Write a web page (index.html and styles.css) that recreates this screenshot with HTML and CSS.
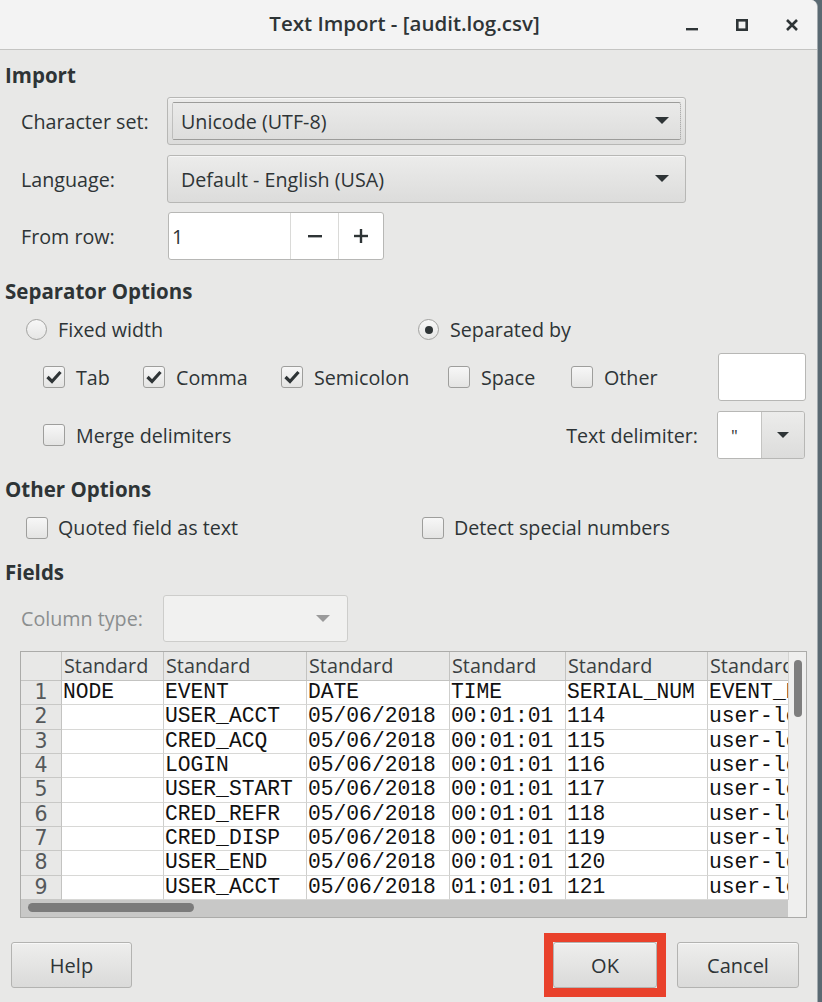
FILE: index.html
```html
<!DOCTYPE html>
<html lang="en">
<head>
<meta charset="utf-8">
<title>Text Import</title>
<link rel="stylesheet" href="styles.css">
</head>
<body>
<div class="window">
  <header class="titlebar">
    <div class="title">Text Import - [audit.log.csv]</div>
    <div class="wm">
      <span class="wm-btn"><svg width="12" height="12" viewBox="0 0 12 12"><rect x="0" y="9" width="12" height="2.4" fill="#2e3436"/></svg></span>
      <span class="wm-btn"><svg width="12" height="12" viewBox="0 0 12 12"><rect x="1.3" y="1.3" width="9.4" height="9.4" fill="none" stroke="#2e3436" stroke-width="2.6"/></svg></span>
      <span class="wm-btn"><svg width="12" height="12" viewBox="0 0 12 12"><path d="M1 1 L11 11 M11 1 L1 11" stroke="#2e3436" stroke-width="2.6" fill="none"/></svg></span>
    </div>
  </header>

  <main class="content">
    <h2 class="heading h-import">Import</h2>

    <div class="form-row r-charset">
      <span class="lbl">Character set:</span>
      <div class="combo focused">
        <span class="combo-text">Unicode (UTF-8)</span>
        <svg class="arrow" width="14" height="8" viewBox="0 0 14 8"><path d="M0 0 H14 L7 7 Z" fill="#2e3436"/></svg>
      </div>
    </div>

    <div class="form-row r-lang">
      <span class="lbl">Language:</span>
      <div class="combo">
        <span class="combo-text">Default - English (USA)</span>
        <svg class="arrow" width="14" height="8" viewBox="0 0 14 8"><path d="M0 0 H14 L7 7 Z" fill="#2e3436"/></svg>
      </div>
    </div>

    <div class="form-row r-from">
      <span class="lbl">From row:</span>
      <div class="spin">
        <span class="spin-entry">1</span>
        <span class="spin-btn sb-minus"><svg width="14" height="14" viewBox="0 0 14 14"><rect x="0" y="6" width="14" height="2.4" fill="#2e3436"/></svg></span>
        <span class="spin-btn sb-plus"><svg width="14" height="14" viewBox="0 0 14 14"><rect x="0" y="5.8" width="14" height="2.4" fill="#2e3436"/><rect x="5.8" y="0" width="2.4" height="14" fill="#2e3436"/></svg></span>
      </div>
    </div>

    <h2 class="heading h-sep">Separator Options</h2>

    <div class="radio-row">
      <label class="opt opt-fixed"><span class="radio"></span><span>Fixed width</span></label>
      <label class="opt"><span class="radio checked"></span><span>Separated by</span></label>
    </div>

    <div class="check-row">
      <label class="opt"><span class="check checked"><svg width="16" height="14" viewBox="0 0 16 14"><path d="M1.5 7 L6 11.5 L14.5 2" fill="none" stroke="#2e3436" stroke-width="3.2"/></svg></span><span>Tab</span></label>
      <label class="opt"><span class="check checked"><svg width="16" height="14" viewBox="0 0 16 14"><path d="M1.5 7 L6 11.5 L14.5 2" fill="none" stroke="#2e3436" stroke-width="3.2"/></svg></span><span>Comma</span></label>
      <label class="opt"><span class="check checked"><svg width="16" height="14" viewBox="0 0 16 14"><path d="M1.5 7 L6 11.5 L14.5 2" fill="none" stroke="#2e3436" stroke-width="3.2"/></svg></span><span>Semicolon</span></label>
      <label class="opt"><span class="check"></span><span>Space</span></label>
      <label class="opt"><span class="check"></span><span>Other</span></label>
      <span class="entry other-entry"></span>
    </div>

    <div class="merge-row">
      <label class="opt merge"><span class="check"></span><span>Merge delimiters</span></label>
      <span class="lbl-td">Text delimiter:</span>
      <div class="td-combo">
        <span class="td-entry">"</span>
        <span class="td-btn"><svg width="12" height="7" viewBox="0 0 12 7"><path d="M0 0 H12 L6 6 Z" fill="#2e3436"/></svg></span>
      </div>
    </div>

    <h2 class="heading h-other">Other Options</h2>

    <div class="quoted-row">
      <label class="opt opt-quoted"><span class="check"></span><span>Quoted field as text</span></label>
      <label class="opt"><span class="check"></span><span>Detect special numbers</span></label>
    </div>

    <h2 class="heading h-fields">Fields</h2>

    <div class="coltype-row">
      <span class="lbl disabled">Column type:</span>
      <div class="combo disabled-combo">
        <svg class="arrow" width="14" height="8" viewBox="0 0 14 8"><path d="M0 0 H14 L7 7 Z" fill="#9a9a9a"/></svg>
      </div>
    </div>

    <div class="grid-wrap">
      <div class="cells-viewport">
        <div class="cells">
          <div class="hc corner"></div>
          <div class="hc">Standard</div><div class="hc">Standard</div><div class="hc">Standard</div><div class="hc">Standard</div><div class="hc">Standard</div><div class="hc">Standard</div>

          <div class="rn">1</div><div class="dc">NODE</div><div class="dc">EVENT</div><div class="dc">DATE</div><div class="dc">TIME</div><div class="dc">SERIAL_NUM</div><div class="dc">EVENT_NAME</div>
          <div class="rn">2</div><div class="dc"></div><div class="dc">USER_ACCT</div><div class="dc">05/06/2018</div><div class="dc">00:01:01</div><div class="dc">114</div><div class="dc">user-login</div>
          <div class="rn">3</div><div class="dc"></div><div class="dc">CRED_ACQ</div><div class="dc">05/06/2018</div><div class="dc">00:01:01</div><div class="dc">115</div><div class="dc">user-login</div>
          <div class="rn">4</div><div class="dc"></div><div class="dc">LOGIN</div><div class="dc">05/06/2018</div><div class="dc">00:01:01</div><div class="dc">116</div><div class="dc">user-login</div>
          <div class="rn">5</div><div class="dc"></div><div class="dc">USER_START</div><div class="dc">05/06/2018</div><div class="dc">00:01:01</div><div class="dc">117</div><div class="dc">user-login</div>
          <div class="rn">6</div><div class="dc"></div><div class="dc">CRED_REFR</div><div class="dc">05/06/2018</div><div class="dc">00:01:01</div><div class="dc">118</div><div class="dc">user-login</div>
          <div class="rn">7</div><div class="dc"></div><div class="dc">CRED_DISP</div><div class="dc">05/06/2018</div><div class="dc">00:01:01</div><div class="dc">119</div><div class="dc">user-login</div>
          <div class="rn">8</div><div class="dc"></div><div class="dc">USER_END</div><div class="dc">05/06/2018</div><div class="dc">00:01:01</div><div class="dc">120</div><div class="dc">user-login</div>
          <div class="rn">9</div><div class="dc"></div><div class="dc">USER_ACCT</div><div class="dc">05/06/2018</div><div class="dc">01:01:01</div><div class="dc">121</div><div class="dc">user-login</div>
        </div>
      </div>
      <div class="vscroll"><span class="vthumb"></span></div>
      <div class="hscroll"><span class="hthumb"></span></div>
      <div class="scorner"></div>
    </div>

    <div class="button-row">
      <button class="btn btn-help">Help</button>
      <span class="spacer"></span>
      <span class="highlight"><button class="btn btn-ok">OK</button></span>
      <button class="btn btn-cancel">Cancel</button>
    </div>
  </main>
</div>
</body>
</html>
```

FILE: styles.css
```css
* { box-sizing: border-box; }
html, body { margin: 0; padding: 0; }
body {
  width: 822px;
  height: 1002px;
  overflow: hidden;
  background: #5a6972;
  font-family: "Open Sans", "Noto Sans", sans-serif;
  font-size: 19.7px;
  color: #2e3436;
}
.window {
  width: 818px;
  height: 1002px;
  background: #e8e8e7;
  border-top-right-radius: 7px;
  border-right: 1px solid #a3aaae;
  overflow: hidden;
}

/* title bar */
.titlebar {
  height: 50px;
  background: #f3f3f3;
  border-bottom: 1px solid #c4c4c2;
  display: grid;
  grid-template-columns: 1fr auto 1fr;
  align-items: center;
}
.title {
  grid-column: 2;
  font-size: 20.5px;
  font-weight: 600;
  color: #2e3436;
  padding-right: 8px;
  padding-bottom: 3px;
}
.wm { grid-column: 3; justify-self: end; display: flex; }
.wm-btn {
  width: 50px;
  height: 46px;
  display: flex;
  align-items: center;
  justify-content: center;
}

/* content */
.content { display: flex; flex-direction: column; }
.heading {
  margin: 0;
  padding-left: 5px;
  font-size: 20.5px;
  font-weight: 700;
  line-height: 24px;
  height: 24px;
  color: #2e3436;
}
.h-import { margin-top: 13px; }
.h-sep { margin-top: 19px; }
.h-other { margin-top: 18px; }
.h-fields { margin-top: 22px; }

.form-row {
  display: flex;
  align-items: center;
  height: 48px;
  padding-left: 21px;
}
.r-charset { margin-top: 10px; }
.r-lang { margin-top: 10px; }
.r-from { margin-top: 9px; }
.lbl { width: 146px; flex: none; }
.lbl.disabled { color: #8b8e8f; width: 142px; }

.combo {
  position: relative;
  width: 519px;
  height: 48px;
  border: 1px solid #b7b7b5;
  border-radius: 3px;
  background: linear-gradient(#ececeb, #dcdcdb);
  box-shadow: inset 0 1px 0 #f6f6f6;
  display: flex;
  align-items: center;
  padding: 0 13px;
}
.combo.focused::after {
  content: "";
  position: absolute;
  inset: 4px;
  border: 1px dotted #9c9c9a;
  border-top-style: solid;
  border-bottom-style: solid;
  border-radius: 2px;
  pointer-events: none;
}
.combo-text { flex: 1; }
.combo .arrow { flex: none; margin-right: 3px; }

.spin {
  display: flex;
  height: 48px;
  margin-left: 1px;
  border: 1px solid #b7b7b5;
  border-radius: 3px;
  background: #fff;
  overflow: hidden;
}
.spin-entry {
  width: 121px;
  padding-left: 3px;
  display: flex;
  align-items: center;
}
.spin-btn {
  display: flex;
  align-items: center;
  justify-content: center;
  border-left: 1px solid #dadad8;
}
.sb-minus { width: 48px; }
.sb-plus { width: 45px; }

/* options */
.opt { display: flex; align-items: center; gap: 11px; }
.radio {
  width: 21px;
  height: 21px;
  border: 1px solid #a2a2a0;
  border-radius: 50%;
  background: linear-gradient(#f7f7f7, #e6e6e5);
  display: flex;
  align-items: center;
  justify-content: center;
  flex: none;
}
.radio.checked::before {
  content: "";
  width: 8px;
  height: 8px;
  border-radius: 50%;
  background: #2e3436;
}
.check {
  width: 22px;
  height: 22px;
  border: 1px solid #9e9e9c;
  border-radius: 3px;
  background: linear-gradient(#f7f7f7, #e4e4e3);
  display: flex;
  align-items: center;
  justify-content: center;
  flex: none;
}

.radio-row {
  margin-top: 13px;
  height: 24px;
  display: grid;
  grid-template-columns: 392px auto;
  align-items: center;
  padding-left: 26px;
}
.check-row {
  margin-top: 13px;
  height: 48px;
  display: grid;
  grid-template-columns: 100px 138px 167px 123px 147px 88px;
  align-items: center;
  padding-left: 43px;
}
.entry {
  height: 48px;
  border: 1px solid #b7b7b5;
  border-radius: 3px;
  background: #fff;
}
.merge-row {
  margin-top: 10px;
  height: 48px;
  display: flex;
  align-items: center;
  padding-left: 43px;
  padding-right: 12px;
}
.merge { flex: 1; }
.lbl-td { margin-right: 19px; }
.td-combo {
  width: 88px;
  height: 48px;
  display: flex;
  border: 1px solid #b7b7b5;
  border-radius: 3px;
  overflow: hidden;
}
.td-entry {
  width: 43px;
  background: #fff;
  padding-left: 13px;
  display: flex;
  align-items: center;
  font-size: 17px;
}
.td-btn {
  flex: 1;
  border-left: 1px solid #c4c4c2;
  background: linear-gradient(#ececeb, #dcdcdb);
  display: flex;
  align-items: center;
  justify-content: center;
}

.quoted-row {
  margin-top: 13px;
  height: 24px;
  display: grid;
  grid-template-columns: 396px auto;
  align-items: center;
  padding-left: 26px;
}
.quoted-row .opt { gap: 10px; }

.coltype-row {
  margin-top: 11px;
  height: 47px;
  display: flex;
  align-items: center;
  padding-left: 21px;
}
.disabled-combo {
  width: 185px;
  height: 47px;
  background: #f1f1f0;
  border-color: #cdcdcb;
  box-shadow: none;
  justify-content: flex-end;
  padding-right: 14px;
}

/* data grid */
.grid-wrap {
  margin-top: 9px;
  margin-left: 20px;
  width: 787px;
  height: 267px;
  border: 1px solid #ababa9;
  display: grid;
  grid-template-columns: 767px 18px;
  grid-template-rows: 248px 17px;
  background: #fff;
}
.cells-viewport { overflow: hidden; }
.cells {
  width: 827px;
  display: grid;
  grid-template-columns: 41px 102px 143px 143px 116px 142px 140px;
  grid-template-rows: 29px repeat(9, 24.33px);
}
.hc {
  background: #e8e8e7;
  border-right: 1px solid #c3c3c1;
  border-bottom: 1px solid #c3c3c1;
  padding-left: 2px;
  font-size: 19.8px;
  line-height: 27px;
  color: #3a3f41;
  white-space: nowrap;
  overflow: hidden;
}
.rn {
  background: #e8e8e7;
  border-right: 1px solid #c3c3c1;
  border-bottom: 1px solid #c8c8c6;
  text-align: center;
  font-family: "DejaVu Sans", "Open Sans", sans-serif;
  font-size: 20.5px;
  line-height: 23px;
  color: #55595b;
}
.dc {
  background: #fff;
  border-right: 1px solid #cfcfcd;
  border-bottom: 1px solid #d8d8d6;
  padding-left: 1px;
  font-family: "Liberation Mono", "DejaVu Sans Mono", monospace;
  font-size: 21.3px;
  line-height: 23px;
  color: #111;
  white-space: nowrap;
  overflow: hidden;
}
.vscroll {
  background: #efefee;
  border-left: 1px solid #d4d4d2;
  padding-top: 8px;
  display: flex;
  justify-content: center;
}
.vthumb {
  width: 8px;
  height: 57px;
  border-radius: 4px;
  background: #7e7e7e;
}
.hscroll {
  background: #c8c8c7;
  padding: 3px 0 0 7px;
}
.hthumb {
  display: block;
  width: 166px;
  height: 9px;
  border-radius: 5px;
  background: #7b7b7b;
}
.scorner { background: #efefee; }

/* buttons */
.button-row {
  margin-top: 15px;
  height: 64px;
  display: flex;
  align-items: center;
  padding-left: 11px;
  padding-right: 18px;
}
.spacer { flex: 1; }
.btn {
  height: 46px;
  border: 1px solid #b3b3b1;
  border-radius: 3px;
  background: linear-gradient(#eeeeed, #dadad9);
  box-shadow: inset 0 1px 0 #f8f8f8;
  font-family: "Open Sans", "Noto Sans", sans-serif;
  font-size: 20px;
  color: #2e3436;
  padding: 0;
}
.btn-help { width: 121px; }
.highlight {
  display: flex;
  border: 9px solid #e9412b;
  margin-right: 11px;
}
.btn-ok { width: 104px; }
.btn-cancel { width: 122px; }
```
